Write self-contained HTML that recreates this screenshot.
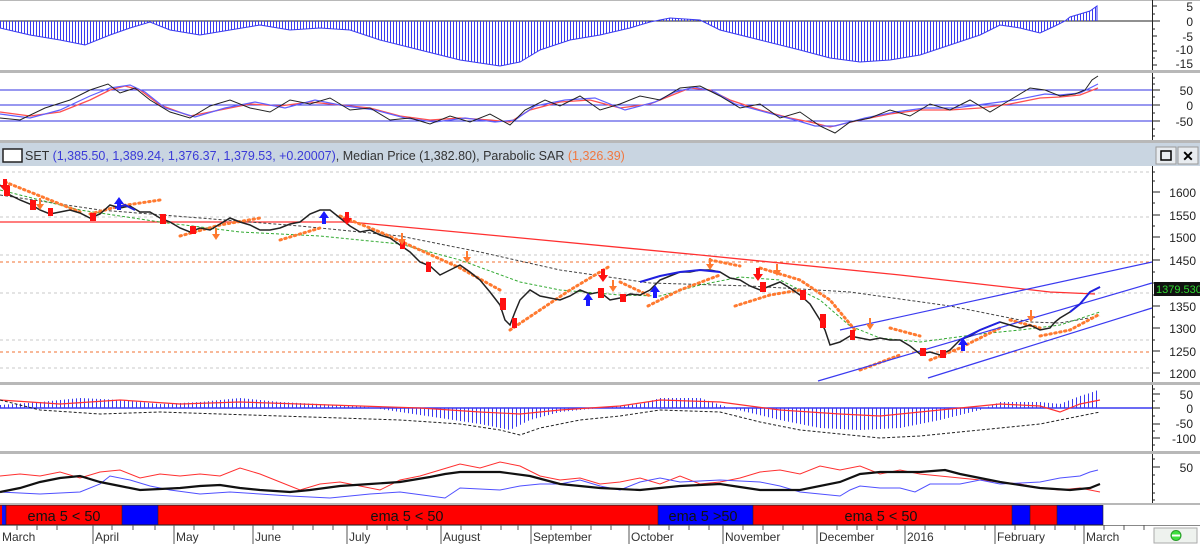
<!DOCTYPE html>
<html><head><meta charset="utf-8"><style>
html,body{margin:0;padding:0;width:1200px;height:545px;overflow:hidden;background:#fff;font-family:"Liberation Sans",sans-serif}
svg text{font-family:"Liberation Sans",sans-serif}
</style></head><body>
<svg width="1200" height="545" viewBox="0 0 1200 545" xmlns="http://www.w3.org/2000/svg">
<defs>
<pattern id="vl" width="3" height="10" patternUnits="userSpaceOnUse"><rect x="0" y="0" width="1" height="10" fill="#3a3af0"/></pattern>
<pattern id="vl2" width="4" height="10" patternUnits="userSpaceOnUse"><rect x="0" y="0" width="1" height="10" fill="#3a3af0"/></pattern>
</defs>
<rect width="1200" height="545" fill="#fff"/>
<g fill="#b8b8b8">
<rect x="0" y="70" width="1200" height="3"/>
<rect x="0" y="140" width="1200" height="3"/>
<rect x="0" y="382" width="1200" height="3"/>
<rect x="0" y="451" width="1200" height="3"/>
</g>
<rect x="0" y="0" width="1200" height="1" fill="#b8b8b8"/>
<g stroke="#222" stroke-width="1">
<line x1="1152.5" y1="0" x2="1152.5" y2="70"/>
<line x1="1152.5" y1="73" x2="1152.5" y2="140"/>
<line x1="1152.5" y1="166" x2="1152.5" y2="382"/>
<line x1="1152.5" y1="385" x2="1152.5" y2="451"/>
<line x1="1152.5" y1="454" x2="1152.5" y2="503"/>
</g>
<g stroke="#222" stroke-width="1">
<path d="M1152 6h5M1152 14h3M1152 21h8M1152 29h3M1152 36h5M1152 44h3M1152 51h5M1152 58h3M1152 65h5"/>
<path d="M1152 78h3M1152 84h3M1152 90h8M1152 97h3M1152 105h8M1152 113h3M1152 121h8M1152 129h3M1152 136h3"/>
<path d="M1152 172h3M1152 181h3M1152 192h8M1152 203h3M1152 215h8M1152 226h3M1152 237h8M1152 249h3M1152 260h8M1152 272h3M1152 283h8M1152 295h3M1152 306h8M1152 317h3M1152 328h8M1152 340h3M1152 351h8M1152 362h3M1152 373h8"/>
<path d="M1152 389h3M1152 394h8M1152 401h3M1152 408h8M1152 416h3M1152 424h8M1152 431h3M1152 438h8M1152 445h3"/>
<path d="M1152 459h3M1152 467h8M1152 475h3M1152 484h3M1152 493h3M1152 500h3"/>
</g>
<g font-size="12" fill="#222" text-anchor="end">
<text x="1193" y="11">5</text><text x="1193" y="26">0</text><text x="1193" y="41">-5</text><text x="1193" y="54">-10</text><text x="1193" y="68">-15</text>
<text x="1193" y="95">50</text><text x="1193" y="110">0</text><text x="1193" y="126">-50</text>
<text x="1196" y="197">1600</text><text x="1196" y="220">1550</text><text x="1196" y="242">1500</text><text x="1196" y="265">1450</text><text x="1196" y="311">1350</text><text x="1196" y="333">1300</text><text x="1196" y="356">1250</text><text x="1196" y="378">1200</text>
<text x="1193" y="399">50</text><text x="1193" y="413">0</text><text x="1193" y="428">-50</text><text x="1196" y="443">-100</text>
<text x="1193" y="472">50</text>
</g>

<line x1="0" y1="21" x2="1152" y2="21" stroke="#222"/>
<path d="M0 21L0 28 30 35 60 40 85 45 110 35 130 28 150 22 170 30 200 35 230 30 260 25 290 30 320 28 350 30 380 40 420 50 460 60 500 66 520 62 540 50 570 40 600 35 630 28 650 22 670 18 700 20 720 30 760 40 800 50 830 58 860 62 890 60 920 55 950 45 980 35 1000 25 1020 28 1040 33 1055 26 1065 21 1070 17 1080 14 1090 11 1097 6 1097 21Z" fill="url(#vl)"/>
<path d="M0 28L30 35 60 40 85 45 110 35 130 28 150 22 170 30 200 35 230 30 260 25 290 30 320 28 350 30 380 40 420 50 460 60 500 66 520 62 540 50 570 40 600 35 630 28 650 22 670 18 700 20 720 30 760 40 800 50 830 58 860 62 890 60 920 55 950 45 980 35 1000 25 1020 28 1040 33 1055 26 1065 21 1070 17 1080 14 1090 11 1097 6 1097 21" fill="none" stroke="#3a3af0" stroke-width="1"/>

<g stroke="#3030e0" stroke-width="1"><line x1="0" y1="90" x2="1152" y2="90"/><line x1="0" y1="105" x2="1152" y2="105"/><line x1="0" y1="121" x2="1152" y2="121"/></g>
<path d="M0 112L30 116 60 112 90 100 110 90 125 86 140 90 160 105 190 116 220 110 250 104 280 106 310 102 340 105 370 108 400 116 430 120 460 118 490 120 510 122 530 110 560 102 590 100 620 108 650 104 670 96 690 88 710 90 730 100 760 110 790 118 810 122 830 127 860 120 890 114 920 110 950 110 980 108 1010 104 1040 98 1060 97 1080 95 1098 88" fill="none" stroke="#ff5050" stroke-width="1.3"/>
<path d="M0 114L30 118 60 110 90 96 110 88 130 85 145 92 165 108 195 117 225 108 255 102 285 108 315 100 345 106 375 110 405 118 435 122 465 118 495 122 515 120 535 106 565 100 595 98 625 110 655 102 675 92 695 87 715 92 735 104 765 112 795 120 815 126 835 126 865 118 895 112 925 108 955 108 985 104 1015 100 1045 94 1060 95 1080 93 1098 84" fill="none" stroke="#6060ff" stroke-width="1.2"/>
<path d="M0 118L20 120 45 108 70 100 90 90 108 84 120 93 135 88 150 100 170 112 190 118 210 106 230 100 250 108 270 112 290 100 310 104 330 98 350 110 370 108 390 120 410 118 430 124 450 116 470 122 490 114 510 125 525 110 545 100 560 106 580 96 600 110 620 104 640 96 660 100 680 88 700 86 720 96 740 108 760 104 780 118 800 112 820 126 835 133 850 122 870 118 890 110 910 116 930 104 950 110 970 100 990 112 1010 100 1030 88 1045 90 1060 96 1075 94 1085 90 1092 80 1098 76" fill="none" stroke="#222" stroke-width="1"/>

<rect x="0" y="143" width="1200" height="23" fill="#c9d5e1"/>
<rect x="3" y="149" width="19" height="13" fill="#fff" stroke="#222" stroke-width="1.5"/>
<text x="25" y="160" font-size="12.5" fill="#333">SET <tspan fill="#3a3ad8">(1,385.50, 1,389.24, 1,376.37, 1,379.53, +0.20007)</tspan>, Median Price (1,382.80), Parabolic SAR <tspan fill="#f07840">(1,326.39)</tspan></text>
<rect x="1156" y="147" width="20" height="17" fill="#e8ecf0" stroke="#999"/>
<rect x="1161" y="151" width="10" height="9" fill="none" stroke="#000" stroke-width="1.5"/>
<rect x="1178" y="147" width="20" height="17" fill="#e8ecf0" stroke="#999"/>
<text x="1188" y="161" font-size="14" font-weight="bold" text-anchor="middle" fill="#000">✕</text>

<g stroke="#c8c8c8" stroke-dasharray="3,3"><line x1="0" y1="172" x2="1152" y2="172"/><line x1="0" y1="217" x2="1152" y2="217"/><line x1="0" y1="255" x2="1152" y2="255"/><line x1="0" y1="293" x2="1152" y2="293"/><line x1="0" y1="340" x2="1152" y2="340"/><line x1="0" y1="368" x2="1152" y2="368"/></g>
<g stroke="#f07030" stroke-dasharray="3,3"><line x1="0" y1="262" x2="1152" y2="262"/><line x1="0" y1="352" x2="1152" y2="352"/></g>
<path d="M0 222L350 222 500 236 700 255 900 275 1050 292 1095 294" fill="none" stroke="#ff3030" stroke-width="1.3"/>
<path d="M0 195L100 210 200 218 300 226 400 236 480 252 560 270 650 283 750 286 850 292 950 306 1030 322 1060 323 1100 316" fill="none" stroke="#444" stroke-dasharray="3,2"/>
<path d="M0 190L80 210 160 222 240 232 320 236 400 244 460 260 520 282 560 290 620 295 660 296 700 285 740 277 780 280 820 300 850 326 880 338 920 342 980 334 1020 330 1060 325 1100 312" fill="none" stroke="#3a3" stroke-dasharray="3,2"/>
<path d="M5 182L40 196 80 212 M90 214L120 206 160 200 M180 236L220 225 260 218 M280 240L320 228 M340 216L380 232 420 250 460 268 500 290 M510 330L540 310 570 290 610 266 M620 282L650 296 M648 306L680 290 720 275 M710 260L740 266 M735 306L770 295 800 290 M760 268L800 280 830 300 855 330 M860 370L900 355 M890 328L920 336 M930 360L960 348 1000 328 M1010 320L1040 328 M1040 336L1070 330 1100 314" fill="none" stroke="#ff7a30" stroke-width="3" stroke-dasharray="1.5,3.5" stroke-linecap="round"/>
<g stroke="#3a3af0" stroke-width="1.2"><line x1="840" y1="330" x2="1152" y2="262"/><line x1="818" y1="381" x2="1152" y2="283"/><line x1="928" y1="378" x2="1152" y2="308"/></g>
<path d="M0 185L10 195 20 200 30 204 40 210 50 214 60 212 70 210 80 213 90 218 100 214 110 205 120 208 130 206 140 212 150 212 160 218 170 222 180 228 190 232 200 228 210 230 220 224 230 218 240 222 250 225 260 230 270 230 280 228 290 224 300 222 310 214 320 210 330 210 340 218 350 226 360 232 370 230 380 235 390 238 400 245 410 252 420 262 430 266 440 275 450 270 460 265 470 272 480 280 490 292 500 305 505 320 510 325 515 312 520 300 530 290 540 296 550 298 560 300 570 296 580 290 590 294 600 292 610 300 620 298 630 294 640 295 650 290 660 280 670 276 680 272 690 272 700 270 710 270 720 272 730 278 740 280 750 286 760 290 770 286 780 282 790 288 800 295 810 304 820 320 825 330 830 345 840 342 850 336 860 338 870 340 880 338 890 340 900 340 910 346 920 354 930 352 940 355 950 350 960 340 970 336 980 330 990 326 1000 322 1010 325 1020 328 1030 325 1040 330 1050 328 1055 322 1060 318 1070 312 1080 304 1085 298 1090 292 1100 287" fill="none" stroke="#222" stroke-width="1.5"/>
<g fill="#ff1010"><rect x="4" y="186" width="6" height="10"/><rect x="30" y="200" width="6" height="10"/><rect x="48" y="208" width="5" height="8"/><rect x="90" y="213" width="6" height="8"/><rect x="160" y="214" width="6" height="10"/><rect x="190" y="226" width="6" height="8"/><rect x="400" y="240" width="5" height="9"/><rect x="426" y="262" width="5" height="10"/><rect x="500" y="298" width="6" height="12"/><rect x="512" y="318" width="5" height="10"/><rect x="598" y="288" width="6" height="10"/><rect x="620" y="294" width="6" height="8"/><rect x="760" y="282" width="6" height="10"/><rect x="800" y="290" width="6" height="10"/><rect x="820" y="314" width="6" height="14"/><rect x="850" y="330" width="5" height="10"/><rect x="920" y="348" width="6" height="8"/><rect x="940" y="350" width="6" height="8"/></g>
<g fill="none" stroke="#2020e0" stroke-width="2"><path d="M115 208L125 205 135 210"/><path d="M640 282L660 276 680 272 700 270 720 272"/><path d="M960 340L980 330 1000 322"/><path d="M1070 312L1080 304 1090 292 1100 287"/></g>
<g fill="#1a1aff"><path d="M119 197l-5 7h3v6h4v-6h3z"/><path d="M324 211l-5 7h3v6h4v-6h3z"/><path d="M588 293l-5 7h3v6h4v-6h3z"/><path d="M655 285l-5 7h3v6h4v-6h3z"/><path d="M963 338l-5 7h3v6h4v-6h3z"/></g>
<g fill="#ff1010"><path d="M5 192l-5-7h3v-6h4v6h3z"/><path d="M347 225l-5-7h3v-6h4v6h3z"/><path d="M603 282l-5-7h3v-6h4v6h3z"/><path d="M758 281l-5-7h3v-6h4v6h3z"/></g>
<g fill="#ff7a30"><path d="M40 210l-4-6h3v-6h2v6h3z"/><path d="M216 240l-4-6h3v-6h2v6h3z"/><path d="M402 245l-4-6h3v-6h2v6h3z"/><path d="M467 263l-4-6h3v-6h2v6h3z"/><path d="M613 292l-4-6h3v-6h2v6h3z"/><path d="M710 270l-4-6h3v-6h2v6h3z"/><path d="M777 276l-4-6h3v-6h2v6h3z"/><path d="M870 330l-4-6h3v-6h2v6h3z"/><path d="M1031 322l-4-6h3v-6h2v6h3z"/></g>
<rect x="1154" y="282" width="46" height="14" fill="#111"/>
<text x="1156" y="293" font-size="11" fill="#2fd82f">1379.530</text>

<line x1="0" y1="408" x2="1152" y2="408" stroke="#3a3af0" stroke-width="1.5"/>
<path d="M0 408L0 405 40 402 80 398 120 400 160 404 200 402 240 398 280 402 320 404 360 406 400 412 440 418 480 424 510 430 530 420 560 412 600 408 640 404 660 398 700 398 730 408 780 420 820 428 860 430 900 428 940 420 980 410 1000 402 1040 402 1060 404 1070 400 1080 396 1090 393 1098 390 1098 408Z" fill="url(#vl2)"/>
<path d="M0 400L60 404 120 400 180 404 240 402 300 404 360 406 420 408 480 412 520 414 560 410 620 406 660 400 720 402 780 410 840 414 880 416 920 412 960 408 1000 404 1040 406 1060 412 1080 404 1100 400" fill="none" stroke="#ff3030" stroke-width="1.2"/>
<path d="M0 400L40 410 100 414 160 412 220 414 280 416 340 418 400 420 460 424 500 430 520 435 540 428 580 420 620 416 660 410 720 412 760 422 800 430 840 434 880 438 920 436 960 432 1000 428 1040 424 1070 418 1100 412" fill="none" stroke="#222" stroke-dasharray="3,2"/>

<path d="M0 476L20 474 40 476 60 472 80 478 100 472 120 470 140 478 160 474 180 476 200 474 220 476 240 468 260 474 280 482 300 490 320 484 340 482 360 486 380 490 400 480 420 476 440 470 460 464 480 468 500 462 520 466 540 476 560 480 580 478 600 484 620 482 640 478 660 484 680 476 700 484 720 482 740 478 760 472 780 470 800 474 820 466 840 470 860 466 880 474 900 470 920 474 940 476 960 478 980 480 1000 482 1020 484 1040 488 1060 490 1080 488 1100 492" fill="none" stroke="#ff3030" stroke-width="1"/>
<path d="M0 492L40 494 80 492 100 484 110 476 130 480 150 486 170 490 200 494 230 492 260 494 290 496 330 498 370 494 400 492 430 496 445 498 460 488 500 490 520 486 540 484 560 484 580 480 600 486 620 490 640 482 660 478 680 482 720 480 760 482 780 486 800 492 820 494 840 496 850 490 860 486 880 488 900 488 915 492 930 484 960 484 980 480 1000 484 1040 482 1060 478 1080 476 1090 472 1098 470" fill="none" stroke="#5050ff" stroke-width="1"/>
<path d="M0 492L20 488 40 482 60 478 80 476 100 482 120 486 140 490 160 489 180 488 200 486 220 485 240 488 260 490 290 492 310 490 340 486 370 484 400 482 430 477 445 474 460 472 500 472 530 476 560 484 600 488 640 490 680 486 720 484 760 490 800 490 840 482 860 474 880 472 920 472 945 470 960 474 1000 482 1040 488 1070 490 1090 488 1100 484" fill="none" stroke="#111" stroke-width="2.2"/>

<rect x="0" y="503" width="1200" height="2" fill="#b8b8b8"/>
<rect x="0" y="505" width="1103" height="20" fill="#ff0000"/>
<rect x="2" y="505" width="4" height="20" fill="#1010ff"/>
<rect x="122" y="505" width="36" height="20" fill="#0000ff"/>
<rect x="658" y="505" width="95" height="20" fill="#0000ff"/>
<rect x="1012" y="505" width="18" height="20" fill="#0000ff"/>
<rect x="1057" y="505" width="46" height="20" fill="#0000ff"/>
<g stroke="#222" stroke-width="0.6"><line x1="0" y1="505.5" x2="1103" y2="505.5"/><line x1="0" y1="524.5" x2="1103" y2="524.5"/><line x1="6" y1="505" x2="6" y2="525"/><line x1="122" y1="505" x2="122" y2="525"/><line x1="158" y1="505" x2="158" y2="525"/><line x1="658" y1="505" x2="658" y2="525"/><line x1="753" y1="505" x2="753" y2="525"/><line x1="1012" y1="505" x2="1012" y2="525"/><line x1="1030" y1="505" x2="1030" y2="525"/><line x1="1057" y1="505" x2="1057" y2="525"/><line x1="1103" y1="505" x2="1103" y2="525"/></g>
<g font-size="14.5" fill="#111" text-anchor="middle"><text x="64" y="521">ema 5 &lt; 50</text><text x="407" y="521">ema 5 &lt; 50</text><text x="703" y="521">ema 5 &gt;50</text><text x="881" y="521">ema 5 &lt; 50</text></g>

<line x1="0" y1="525.5" x2="1200" y2="525.5" stroke="#888"/>
<g stroke="#555" stroke-width="1"><path d="M17 525v5M37 525v5M57 525v5M93 525v19M112 525v5M133 525v5M155 525v5M174 525v19M194 525v5M214 525v5M234 525v5M253 525v19M273 525v5M293 525v5M313 525v5M333 525v5M347 525v19M367 525v5M387 525v5M407 525v5M427 525v5M441 525v19M461 525v5M481 525v5M501 525v5M518 525v5M531 525v19M551 525v5M571 525v5M591 525v5M611 525v5M629 525v19M649 525v5M669 525v5M689 525v5M709 525v5M723 525v19M743 525v5M763 525v5M783 525v5M803 525v5M817 525v19M837 525v5M857 525v5M877 525v5M897 525v5M905 525v19M925 525v5M945 525v5M965 525v5M985 525v5M995 525v19M1015 525v5M1035 525v5M1055 525v5M1075 525v5M1084 525v19M1104 525v5M1124 525v5M1144 525v5"/></g>
<g font-size="12" fill="#333"><text x="2" y="541">March</text><text x="95" y="541">April</text><text x="176" y="541">May</text><text x="255" y="541">June</text><text x="349" y="541">July</text><text x="443" y="541">August</text><text x="533" y="541">September</text><text x="631" y="541">October</text><text x="725" y="541">November</text><text x="819" y="541">December</text><text x="907" y="541">2016</text><text x="997" y="541">February</text><text x="1086" y="541">March</text></g>
<rect x="1154" y="528" width="43" height="15" fill="#eef2ee" stroke="#aaa"/>
<circle cx="1176" cy="535.5" r="5" fill="#3fe03f" stroke="#2a9a2a"/>
<rect x="1172" y="534.5" width="8" height="2" fill="#fff"/>
</svg>
</body></html>
